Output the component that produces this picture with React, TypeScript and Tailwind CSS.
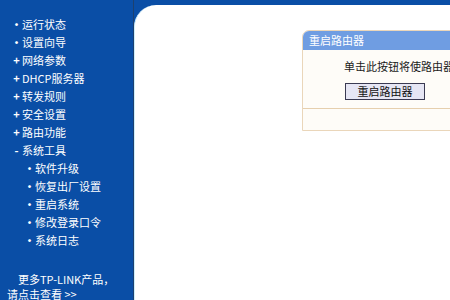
const menu: { mark: string; label: string; sub?: boolean }[] = [
  { mark: "•", label: "运行状态" },
  { mark: "•", label: "设置向导" },
  { mark: "+", label: "网络参数" },
  { mark: "+", label: "DHCP服务器" },
  { mark: "+", label: "转发规则" },
  { mark: "+", label: "安全设置" },
  { mark: "+", label: "路由功能" },
  { mark: "-", label: "系统工具" },
  { mark: "•", label: "软件升级", sub: true },
  { mark: "•", label: "恢复出厂设置", sub: true },
  { mark: "•", label: "重启系统", sub: true },
  { mark: "•", label: "修改登录口令", sub: true },
  { mark: "•", label: "系统日志", sub: true },
];

const cjk = "font-['SimSun','Noto_Sans_CJK_SC',sans-serif]";

export default function App() {
  return (
    <div
      className={`flex w-[450px] h-[300px] overflow-hidden bg-[#0a4ea6] text-[11px] ${cjk}`}
    >
      <aside className="flex flex-col w-[134px] shrink-0 border-r border-[#1d416f] text-white pt-[15px]">
        <ul className="flex flex-col">
          {menu.map((item) => (
            <li
              key={item.label}
              className={`flex items-center h-[18px] ${item.sub ? "pl-[24px]" : "pl-[11px]"}`}
            >
              <span className="w-[11px] text-center font-bold leading-none">
                {item.mark}
              </span>
              <span className="leading-none">{item.label}</span>
            </li>
          ))}
        </ul>
        <div className="mt-[23px] flex flex-col leading-[15px]">
          <span className="pl-[18px]">更多TP-LINK产品，</span>
          <span className="pl-[7px]">请点击查看 &gt;&gt;</span>
        </div>
      </aside>
      <main className="flex-1 pt-[5px] min-w-0">
        <div className="h-full bg-white rounded-tl-[22px] border-l border-[#cdeefb] pl-[167px] pt-[25px] overflow-hidden">
          <section className="w-[210px] border border-[#ead6ba] rounded-tl-[7px] bg-[#fefcf8]">
            <header className="h-[19px] rounded-tl-[6px] bg-[#6f9de2] text-white pl-[6px] flex items-center">
              重启路由器
            </header>
            <div className="flex flex-col items-start pl-[41px] pt-[9px] pb-[8px]">
              <p className="whitespace-nowrap text-[#1a1a1a] leading-[14px]">
                单击此按钮将使路由器重新启动
              </p>
              <button className="mt-[10px] ml-[1px] w-[80px] h-[17px] border border-[#3a3a52] bg-[#e6e6f4] text-[#111] leading-none">
                重启路由器
              </button>
            </div>
            <div className="h-[22px] border-t border-[#e6cfae]" />
          </section>
        </div>
      </main>
    </div>
  );
}
